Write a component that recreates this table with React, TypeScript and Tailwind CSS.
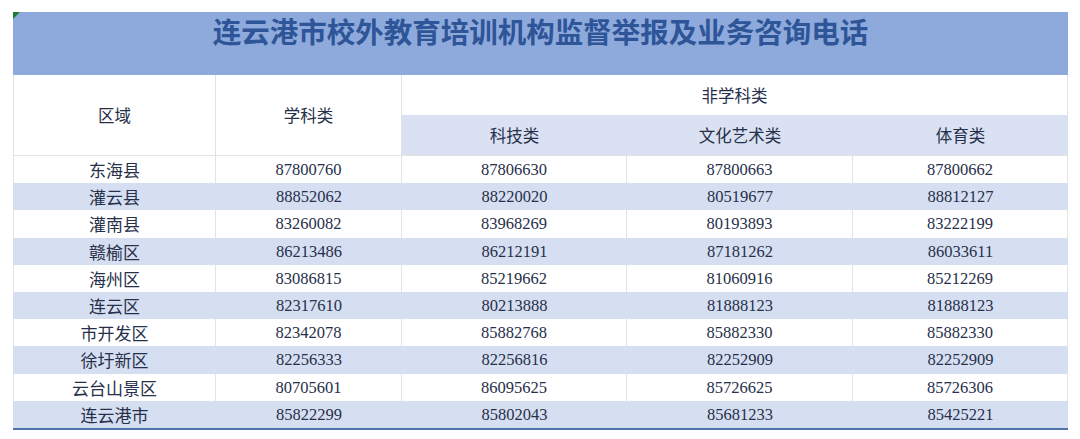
import React from 'react';

const rows: string[][] = [
  ['东海县', '87800760', '87806630', '87800663', '87800662'],
  ['灌云县', '88852062', '88220020', '80519677', '88812127'],
  ['灌南县', '83260082', '83968269', '80193893', '83222199'],
  ['赣榆区', '86213486', '86212191', '87181262', '86033611'],
  ['海州区', '83086815', '85219662', '81060916', '85212269'],
  ['连云区', '82317610', '80213888', '81888123', '81888123'],
  ['市开发区', '82342078', '85882768', '85882330', '85882330'],
  ['徐圩新区', '82256333', '82256816', '82252909', '82252909'],
  ['云台山景区', '80705601', '86095625', '85726625', '85726306'],
  ['连云港市', '85822299', '85802043', '85681233', '85425221'],
];

const cols = 'grid grid-cols-[203px_186px_225px_226px_215px]';

export default function App() {
  return (
    <div className="w-[1080px] h-[439px] bg-white pt-[12px] pl-[13px] font-['Noto_Sans_CJK_SC',sans-serif]">
      <div className="w-[1055px]">
        {/* 标题 */}
        <div className="relative h-[63px] bg-[#8eaadc] flex justify-center pt-[1px]">
          <div className="absolute left-0 top-0 w-0 h-0 border-t-[7px] border-r-[7px] border-t-[#1f7a35] border-r-transparent" />
          <h1 className="text-[28.5px] leading-[36px] font-bold text-[#2e5597] whitespace-nowrap">
            连云港市校外教育培训机构监督举报及业务咨询电话
          </h1>
        </div>

        {/* 表头 */}
        <div className={`${cols} grid-rows-[40px_40px] text-[16.5px] text-[#27304a] border-b border-[#e2e2e2]`}>
          <div className="row-span-2 flex items-center justify-center bg-white border-r border-l border-[#e2e2e2]">区域</div>
          <div className="row-span-2 flex items-center justify-center bg-white border-r border-[#e2e2e2]">学科类</div>
          <div className="col-span-3 flex items-center justify-center bg-white border-r border-[#e2e2e2]">非学科类</div>
          <div className="flex items-center justify-center bg-[#d9e1f2]">科技类</div>
          <div className="flex items-center justify-center bg-[#d9e1f2]">文化艺术类</div>
          <div className="flex items-center justify-center bg-[#d9e1f2]">体育类</div>
        </div>

        {/* 数据 */}
        <div className="border-b-2 border-[#4f73a8]">
          {rows.map((r, i) => {
            const blue = i % 2 === 1;
            return (
              <div
                key={r[0]}
                className={`${cols} h-[27.2px] leading-[27px] text-[#27304a] ${blue ? 'bg-[#d6dff1]' : 'bg-white'}`}
              >
                {r.map((c, j) => (
                  <div
                    key={j}
                    className={`flex items-center justify-center ${
                      j === 0
                        ? "text-[17px]"
                        : "text-[16.5px] font-['Liberation_Serif','Times_New_Roman',serif]"
                    } ${blue ? '' : j === 0 ? 'border-l border-r border-[#e4e4e4]' : 'border-r border-[#e4e4e4]'}`}
                  >
                    {c}
                  </div>
                ))}
              </div>
            );
          })}
        </div>
      </div>
    </div>
  );
}
